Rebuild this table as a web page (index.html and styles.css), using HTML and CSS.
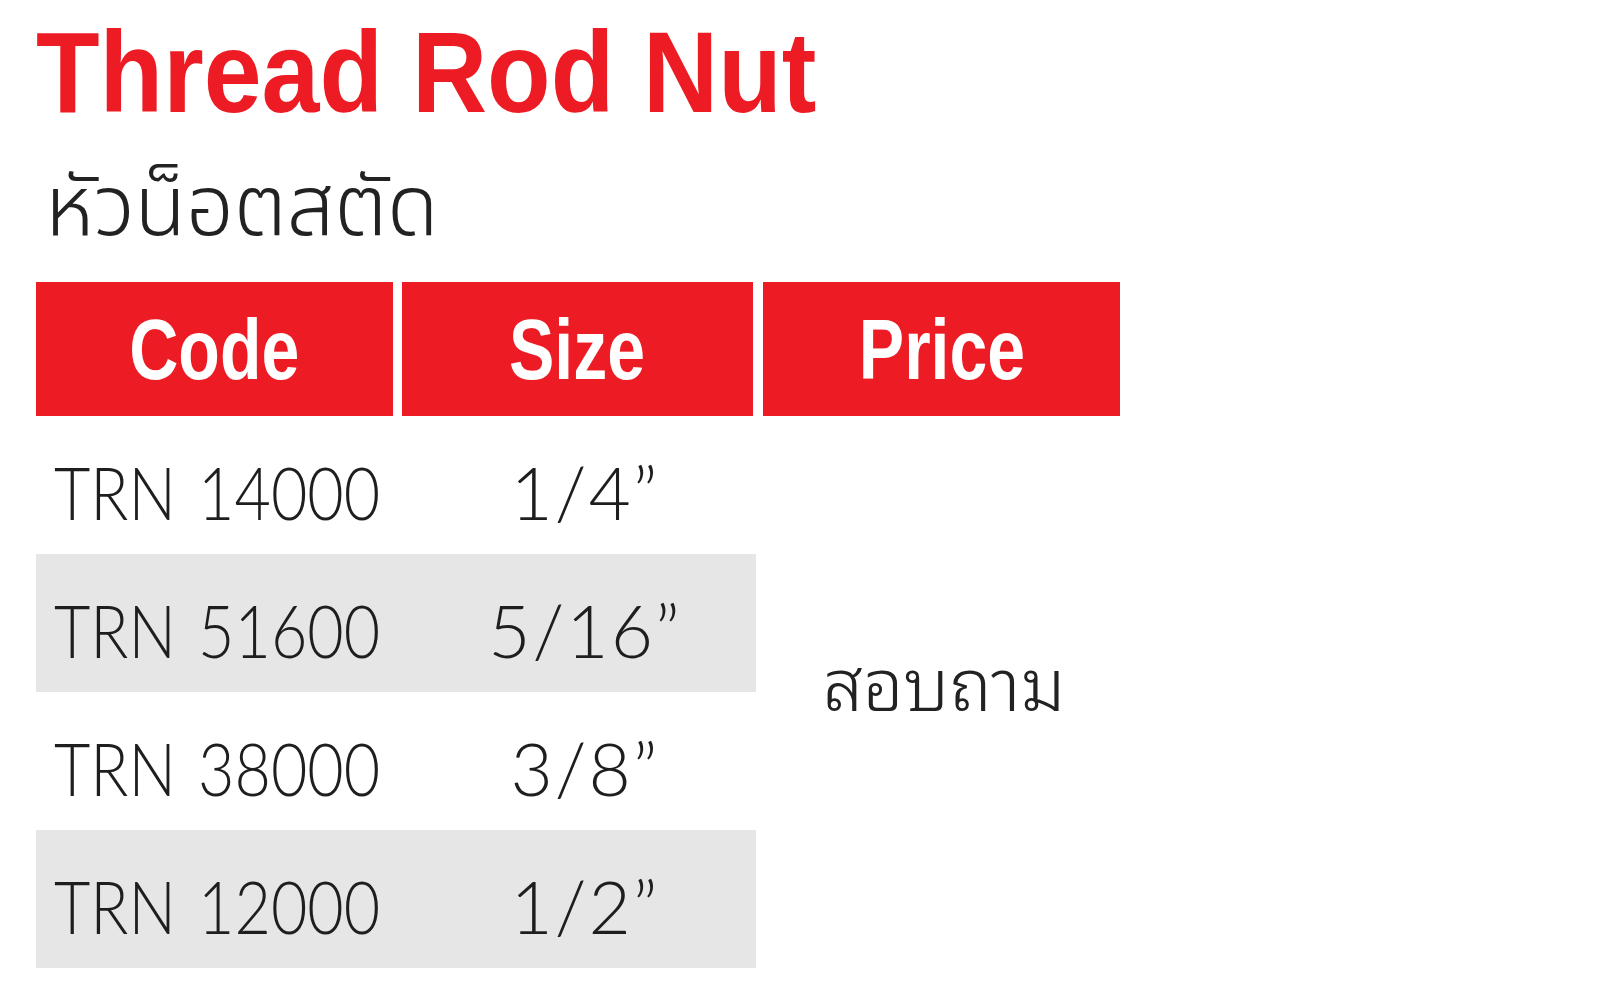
FILE: index.html
```html
<!DOCTYPE html>
<html lang="th">
<head>
<meta charset="utf-8">
<title>Thread Rod Nut</title>
<link rel="stylesheet" href="styles.css">
</head>
<body>
<main class="page">
  <h1 class="title"><span class="title-text">Thread Rod Nut</span></h1>
  <p class="subtitle">หัวน็อตสตัด</p>
  <section class="table">
    <div class="head">
      <div class="hcell hcode"><span class="htext">Code</span></div>
      <div class="hcell hsize"><span class="htext">Size</span></div>
      <div class="hcell hprice"><span class="htext">Price</span></div>
    </div>
    <div class="body">
      <div class="rows">
        <div class="row"><span class="code"><span class="ctext">TRN 14000</span></span><span class="size"><span class="ctext">1/4”</span></span></div>
        <div class="row alt"><span class="code"><span class="ctext">TRN 51600</span></span><span class="size"><span class="ctext">5/16”</span></span></div>
        <div class="row"><span class="code"><span class="ctext">TRN 38000</span></span><span class="size"><span class="ctext">3/8”</span></span></div>
        <div class="row alt"><span class="code"><span class="ctext">TRN 12000</span></span><span class="size"><span class="ctext">1/2”</span></span></div>
      </div>
      <div class="price">สอบถาม</div>
    </div>
  </section>
</main>
</body>
</html>
```

FILE: styles.css
```css
html, body {
  margin: 0;
  padding: 0;
  background: #ffffff;
}

.page {
  padding: 15px 0 0 36px;
  font-family: "Liberation Sans", "Noto Sans Thai", "Noto Sans", sans-serif;
  color: #222222;
}

.title {
  margin: 0;
  height: 115px;
  font-size: 115px;
  line-height: 115px;
  font-weight: 700;
  color: #ed1c24;
  white-space: nowrap;
}

.title-text {
  display: inline-block;
  transform: scaleX(0.905);
  transform-origin: left center;
}

.subtitle {
  margin: 0;
  padding: 20px 0 0 9px;
  height: 152px;
  box-sizing: border-box;
  font-family: "Noto Sans Thai", "Noto Sans", "Liberation Sans", sans-serif;
  font-size: 84px;
  line-height: 120px;
  font-weight: 300;
  color: #222222;
}

.table {
  width: 1084px;
}

.head {
  display: flex;
  gap: 9px;
  height: 134px;
}

.hcell {
  background: #ed1c24;
  display: flex;
  align-items: center;
  justify-content: center;
  color: #ffffff;
  font-size: 85px;
  font-weight: 700;
}

.hcode { width: 357px; }
.hsize { width: 351px; margin-right: 1px; }
.hprice { width: 357px; }

.htext {
  display: inline-block;
  transform: scaleX(0.8);
  line-height: 1;
}

.body {
  display: flex;
}

.rows {
  width: 720px;
}

.row {
  display: flex;
  align-items: center;
  height: 138px;
  padding-top: 14px;
  box-sizing: border-box;
  font-family: "Lato", "Liberation Sans", sans-serif;
  font-weight: 300;
  font-size: 73px;
  color: #1e1e1e;
}

.row.alt {
  background: #e6e6e6;
}

.code {
  width: 366px;
  padding-left: 18px;
  box-sizing: border-box;
  white-space: nowrap;
}

.code .ctext {
  display: inline-block;
  word-spacing: 6px;
  transform: scaleX(0.86);
  transform-origin: left center;
}

.size {
  flex: 1;
  text-align: center;
  padding-left: 12px;
  white-space: nowrap;
  letter-spacing: 2px;
}

.price {
  flex: 1;
  display: flex;
  align-items: center;
  justify-content: center;
  padding-left: 12px;
  padding-bottom: 28px;
  font-family: "Noto Sans Thai Looped", "Noto Sans Thai", "Noto Sans", sans-serif;
  font-size: 72px;
  font-weight: 300;
  color: #222222;
}
```
